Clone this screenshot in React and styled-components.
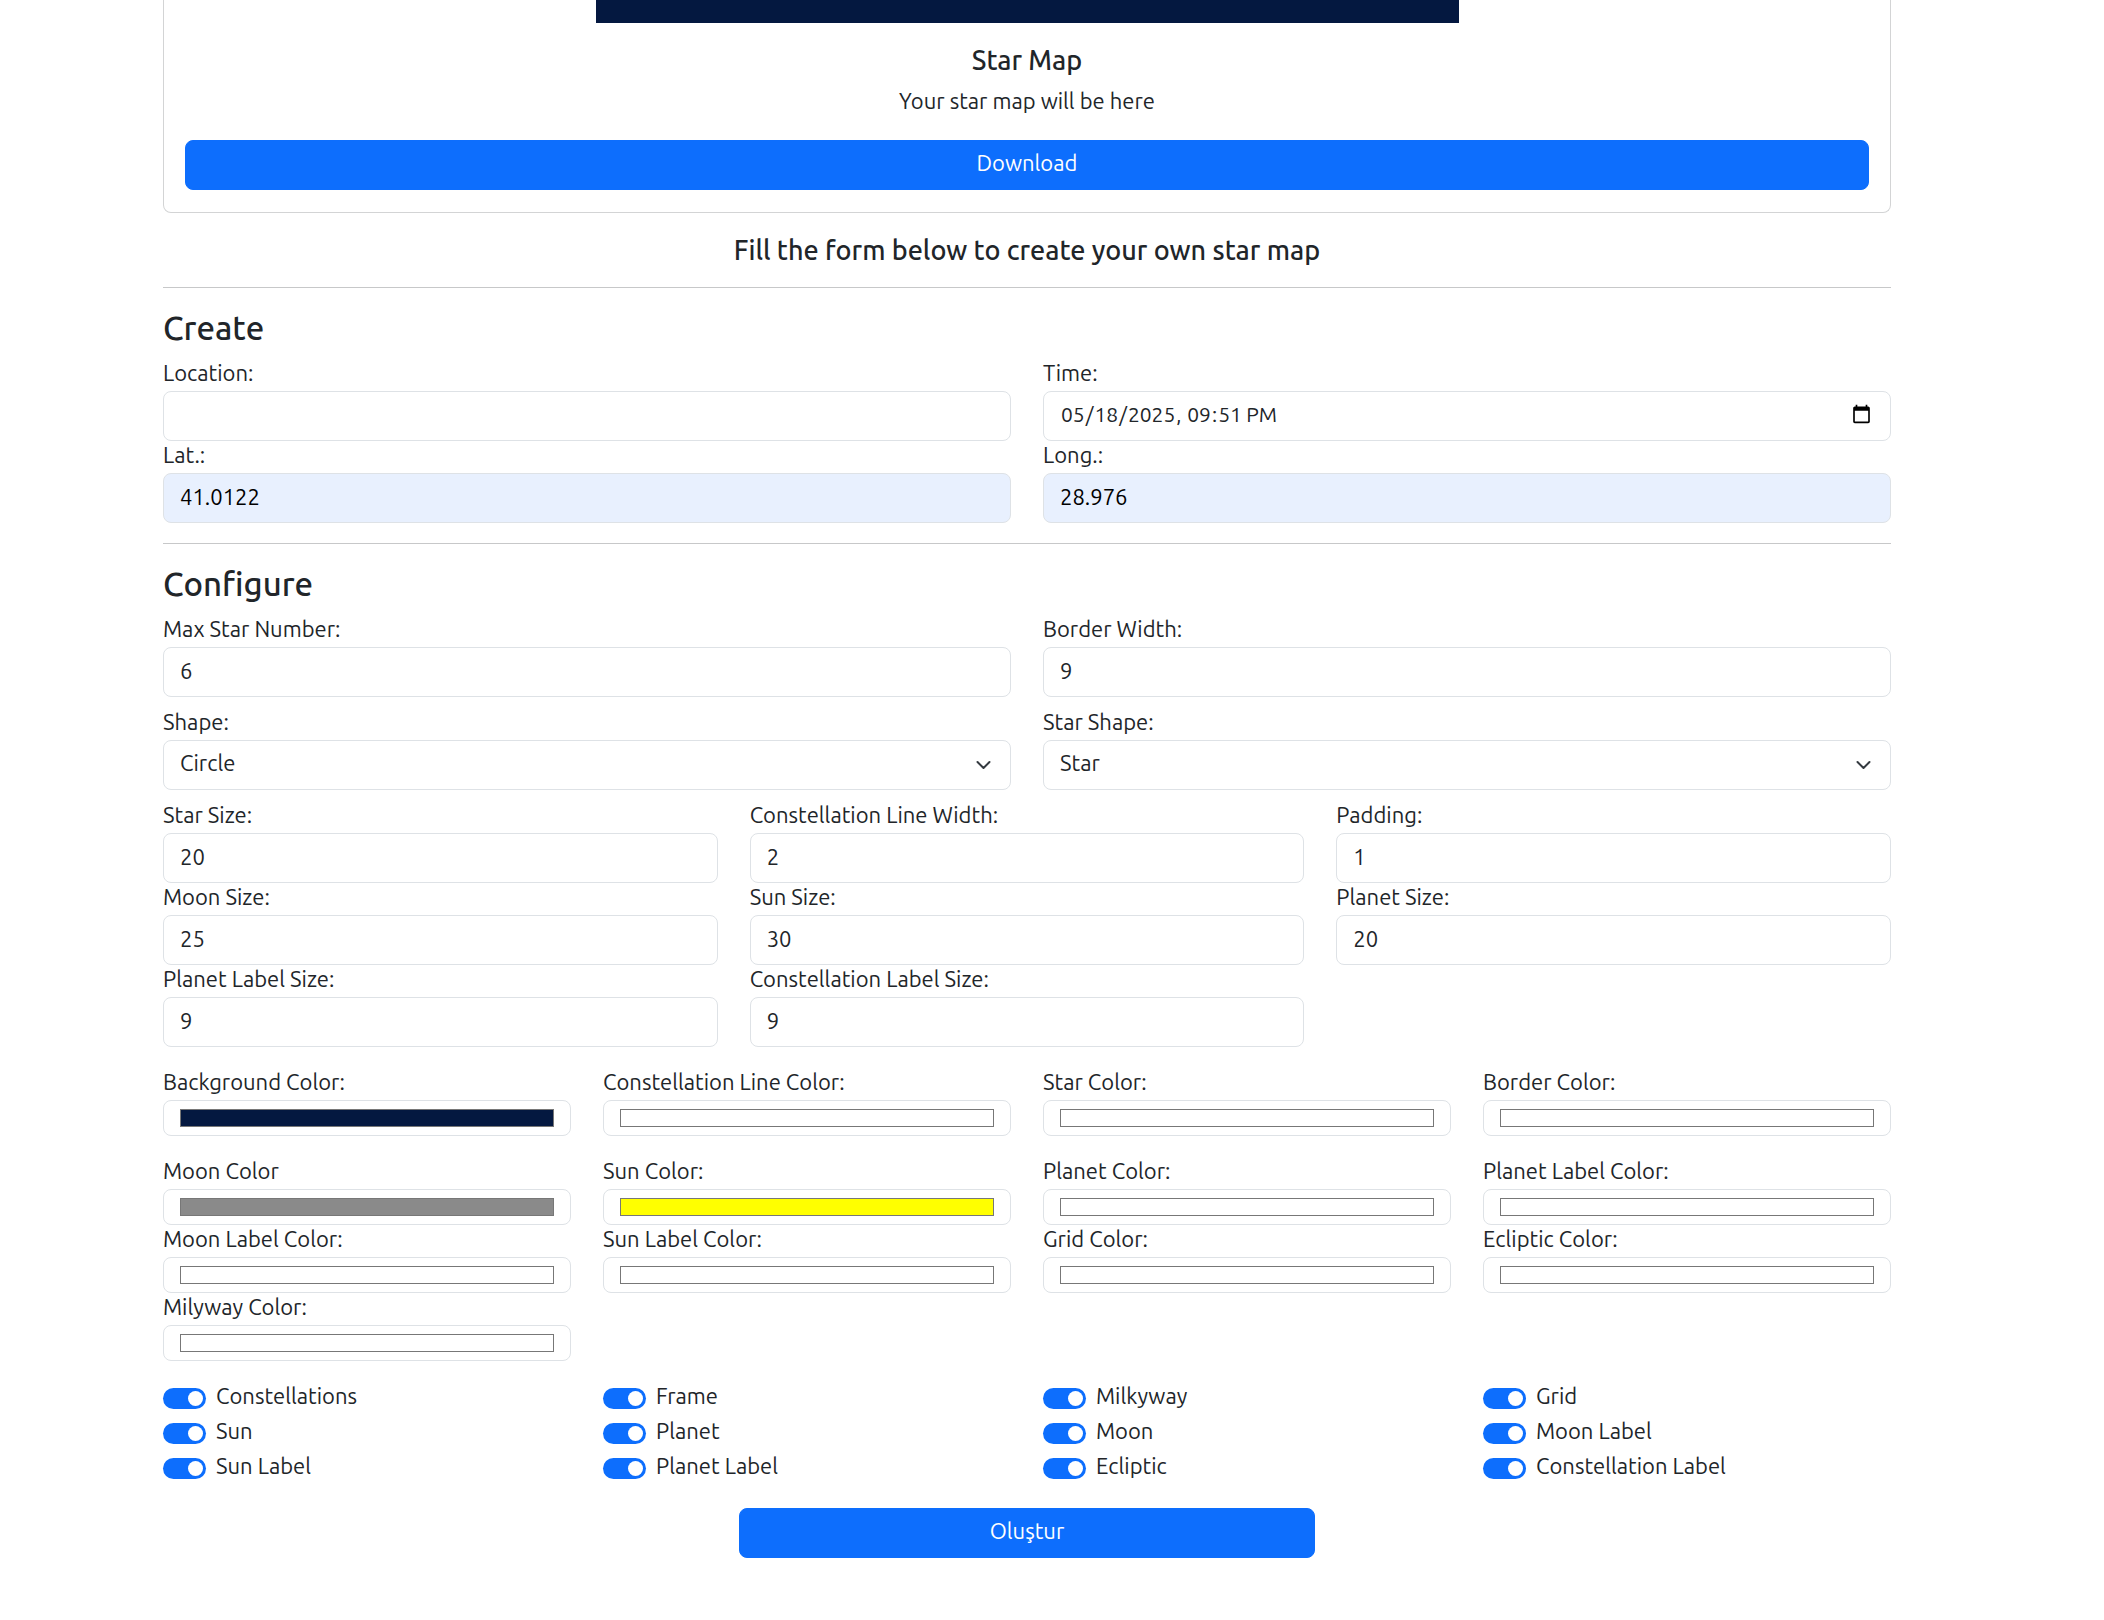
import React, { useId } from "react";
import styled, { createGlobalStyle } from "styled-components";

const GlobalStyle = createGlobalStyle`
  *, *::before, *::after { box-sizing: border-box; }
  body {
    margin: 0;
    background: #fff;
    color: #212529;
    font-family: Ubuntu, "Noto Sans", "Open Sans", sans-serif;
    font-size: 22px;
    line-height: 28px;
  }
  input, select, button { font: inherit; }
`;

const Page = styled.main`
  padding: 0 50px 60px 0;
`;

const Container = styled.div`
  width: 100%;
  max-width: 1728px;
  margin: 0 auto;
`;

const Card = styled.section`
  border: 1px solid #d3d4d5;
  border-top: 0;
  border-radius: 0 0 8px 8px;
`;

const MapCanvas = styled.div`
  width: 50%;
  height: 23px;
  margin: 0 auto;
  background: #041840;
`;

const CardBody = styled.div`
  display: flex;
  flex-direction: column;
  padding: 21px 21px 22px;
  text-align: center;
`;

const Subheading = styled.h5`
  margin: 0;
  font-size: 27px;
  font-weight: 500;
  line-height: 32px;
  text-align: center;
`;

const CardText = styled.p`
  margin: 11px 0 25px;
`;

const Button = styled.button`
  width: ${({ $width }) => $width || "100%"};
  height: 50px;
  padding: 6px 16px 10px;
  border: 1px solid #0d6efd;
  border-radius: 8px;
  background: #0d6efd;
  color: #fff;
  cursor: pointer;
`;

const Prompt = styled.div`
  padding: 21px 0;
`;

const Divider = styled.hr`
  margin: 0;
  border: 0;
  border-top: 1px solid #c7c8c9;
`;

const Heading = styled.h4`
  margin: 21px 0 11px;
  font-size: 33px;
  font-weight: 500;
  line-height: 38px;
  padding-bottom: 1px;
`;

const Row = styled.div`
  display: grid;
  grid-template-columns: repeat(${({ $columns }) => $columns}, 1fr);
  column-gap: 32px;
  row-gap: ${({ $rowGap }) => $rowGap || 0}px;
  margin-bottom: ${({ $bottom }) => $bottom || 0}px;
`;

const FieldBox = styled.div`
  display: flex;
  flex-direction: column;
  min-width: 0;
`;

const Label = styled.label`
  display: block;
  padding-bottom: 4px;
`;

const TextInput = styled.input`
  display: block;
  width: 100%;
  height: 50px;
  padding: 6px 16px 10px;
  border: 1px solid #dee2e6;
  border-radius: 8px;
  background: ${({ $filled }) => ($filled ? "#e8f0fe" : "#fff")};
  color: ${({ $filled }) => ($filled ? "#000" : "#212529")};
  appearance: none;
  &[type="datetime-local"] { font-size: 21px; }
`;

const ColorInput = styled.input`
  display: block;
  width: 100%;
  height: 36px;
  padding: 8px 16px;
  border: 1px solid #dee2e6;
  border-radius: 8px;
  background: #fff;
  appearance: none;
  &::-webkit-color-swatch-wrapper { padding: 0; }
  &::-webkit-color-swatch {
    border: 1px solid #777;
    border-radius: 0;
  }
`;

const SelectBox = styled.div`
  display: grid;
  align-items: center;
  > * { grid-area: 1 / 1; }
`;

const SelectInput = styled.select`
  width: 100%;
  height: 50px;
  padding: 6px 48px 10px 16px;
  border: 1px solid #dee2e6;
  border-radius: 8px;
  background: #fff;
  color: #212529;
  appearance: none;
`;

const Chevron = styled.svg`
  justify-self: end;
  width: 21px;
  height: 16px;
  margin-right: 17px;
  pointer-events: none;
`;

const SwitchRow = styled.div`
  display: flex;
  align-items: center;
  gap: 10px;
`;

const SwitchInput = styled.input`
  display: flex;
  align-items: center;
  justify-content: flex-end;
  flex: none;
  width: 43px;
  height: 21px;
  margin: 0;
  padding: 0 3px;
  border-radius: 11px;
  background: #adb5bd;
  appearance: none;
  &:checked { background: #0d6efd; }
  &:not(:checked) { justify-content: flex-start; }
  &::before {
    content: "";
    width: 15px;
    height: 15px;
    border-radius: 50%;
    background: #fff;
  }
`;

const Actions = styled.div`
  display: flex;
  justify-content: center;
`;

function Field({ label, ...rest }) {
  const id = useId();
  return (
    <FieldBox>
      <Label htmlFor={id}>{label}</Label>
      <TextInput id={id} {...rest} />
    </FieldBox>
  );
}

function SelectField({ label, options }) {
  const id = useId();
  return (
    <FieldBox>
      <Label htmlFor={id}>{label}</Label>
      <SelectBox>
        <SelectInput id={id}>
          {options.map((o) => (
            <option key={o}>{o}</option>
          ))}
        </SelectInput>
        <Chevron viewBox="0 0 16 16" fill="none" aria-hidden="true">
          <path d="m2 5 6 6 6-6" stroke="#343a40" strokeWidth="2" strokeLinecap="round" strokeLinejoin="round" />
        </Chevron>
      </SelectBox>
    </FieldBox>
  );
}

function ColorField({ label, color }) {
  const id = useId();
  return (
    <FieldBox>
      <Label htmlFor={id}>{label}</Label>
      <ColorInput id={id} type="color" defaultValue={color} />
    </FieldBox>
  );
}

function Switch({ label }) {
  const id = useId();
  return (
    <SwitchRow>
      <SwitchInput id={id} type="checkbox" role="switch" defaultChecked />
      <Label htmlFor={id}>{label}</Label>
    </SwitchRow>
  );
}

const sizes = [
  ["Star Size:", 20],
  ["Constellation Line Width:", 2],
  ["Padding:", 1],
  ["Moon Size:", 25],
  ["Sun Size:", 30],
  ["Planet Size:", 20],
  ["Planet Label Size:", 9],
  ["Constellation Label Size:", 9],
];

const mainColors = [
  ["Background Color:", "#041840"],
  ["Constellation Line Color:", "#ffffff"],
  ["Star Color:", "#ffffff"],
  ["Border Color:", "#ffffff"],
];

const detailColors = [
  ["Moon Color", "#8a8a8a"],
  ["Sun Color:", "#ffff00"],
  ["Planet Color:", "#ffffff"],
  ["Planet Label Color:", "#ffffff"],
  ["Moon Label Color:", "#ffffff"],
  ["Sun Label Color:", "#ffffff"],
  ["Grid Color:", "#ffffff"],
  ["Ecliptic Color:", "#ffffff"],
  ["Milyway Color:", "#ffffff"],
];

const switches = [
  "Constellations", "Frame", "Milkyway", "Grid",
  "Sun", "Planet", "Moon", "Moon Label",
  "Sun Label", "Planet Label", "Ecliptic", "Constellation Label",
];

export default function App() {
  return (
    <Page>
      <GlobalStyle />
      <Container>
        <Card>
          <MapCanvas />
          <CardBody>
            <Subheading>Star Map</Subheading>
            <CardText>Your star map will be here</CardText>
            <Button type="button">Download</Button>
          </CardBody>
        </Card>
        <Prompt>
          <Subheading>Fill the form below to create your own star map</Subheading>
        </Prompt>
        <Divider />
        <form onSubmit={(e) => e.preventDefault()}>
          <Heading>Create</Heading>
          <Row $columns={2} $bottom={20}>
            <Field label="Location:" type="text" />
            <Field label="Time:" type="datetime-local" defaultValue="2025-05-18T21:51" />
            <Field label="Lat.:" type="text" defaultValue="41.0122" $filled />
            <Field label="Long.:" type="text" defaultValue="28.976" $filled />
          </Row>
          <Divider />
          <Heading>Configure</Heading>
          <Row $columns={2} $rowGap={11} $bottom={11}>
            <Field label="Max Star Number:" type="number" defaultValue={6} />
            <Field label="Border Width:" type="number" defaultValue={9} />
            <SelectField label="Shape:" options={["Circle", "Square"]} />
            <SelectField label="Star Shape:" options={["Star", "Circle"]} />
          </Row>
          <Row $columns={3} $bottom={21}>
            {sizes.map(([label, value]) => (
              <Field key={label} label={label} type="number" defaultValue={value} />
            ))}
          </Row>
          <Row $columns={4} $bottom={21}>
            {mainColors.map(([label, color]) => (
              <ColorField key={label} label={label} color={color} />
            ))}
          </Row>
          <Row $columns={4} $bottom={21}>
            {detailColors.map(([label, color]) => (
              <ColorField key={label} label={label} color={color} />
            ))}
          </Row>
          <Row $columns={4} $rowGap={3} $bottom={24}>
            {switches.map((label) => (
              <Switch key={label} label={label} />
            ))}
          </Row>
          <Actions>
            <Button type="submit" $width="calc(100% / 3)">Oluştur</Button>
          </Actions>
        </form>
      </Container>
    </Page>
  );
}
